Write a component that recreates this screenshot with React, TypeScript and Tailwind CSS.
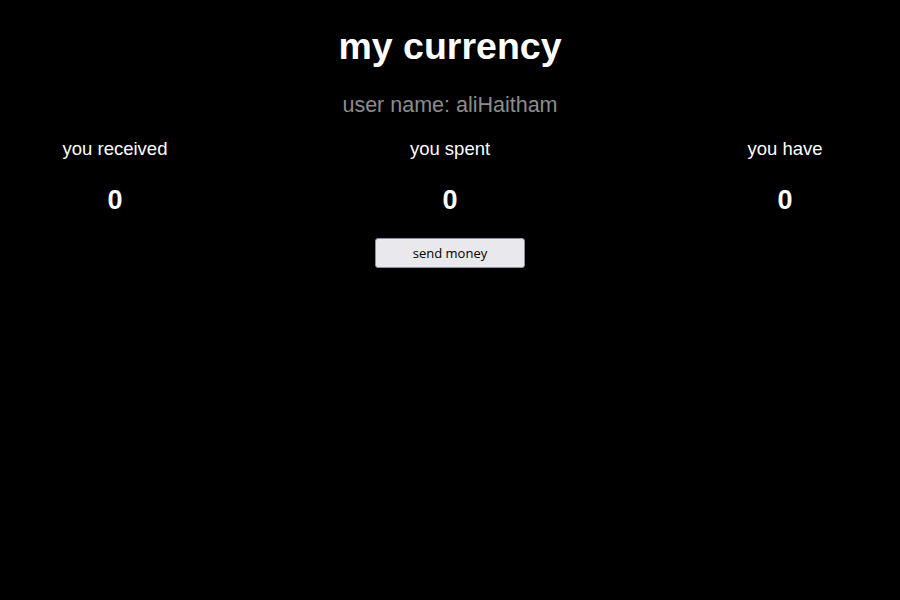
export default function App() {
  const stats = [
    { label: 'you received', value: 0 },
    { label: 'you spent', value: 0 },
    { label: 'you have', value: 0 },
  ];

  return (
    <div className="min-h-screen bg-black text-white font-['Liberation_Sans',Arial,sans-serif]">
      <div className="flex flex-col items-center pt-[25px]">
        {/* header */}
        <h1 className="text-[37.5px] font-bold leading-[42px]">my currency</h1>
        <h2 className="mt-[26px] text-[21.5px] leading-[25px] text-[#8c8c8c]">user name: aliHaitham</h2>

        {/* stats */}
        <div className="mt-[20px] flex w-full justify-between">
          {stats.map((s) => (
            <div key={s.label} className="flex w-[230px] flex-col items-center">
              <p className="text-[18.5px] leading-[21px]">{s.label}</p>
              <p className="mt-[26px] text-[27px] font-bold leading-[30px]">{s.value}</p>
            </div>
          ))}
        </div>

        <button className="mt-[23px] h-[30px] w-[150px] rounded-[3px] border border-[#8f8f9d] bg-[#e9e9ed] pt-[2px] font-['Open_Sans',sans-serif] text-[13px] text-black">
          send money
        </button>
      </div>
    </div>
  );
}
